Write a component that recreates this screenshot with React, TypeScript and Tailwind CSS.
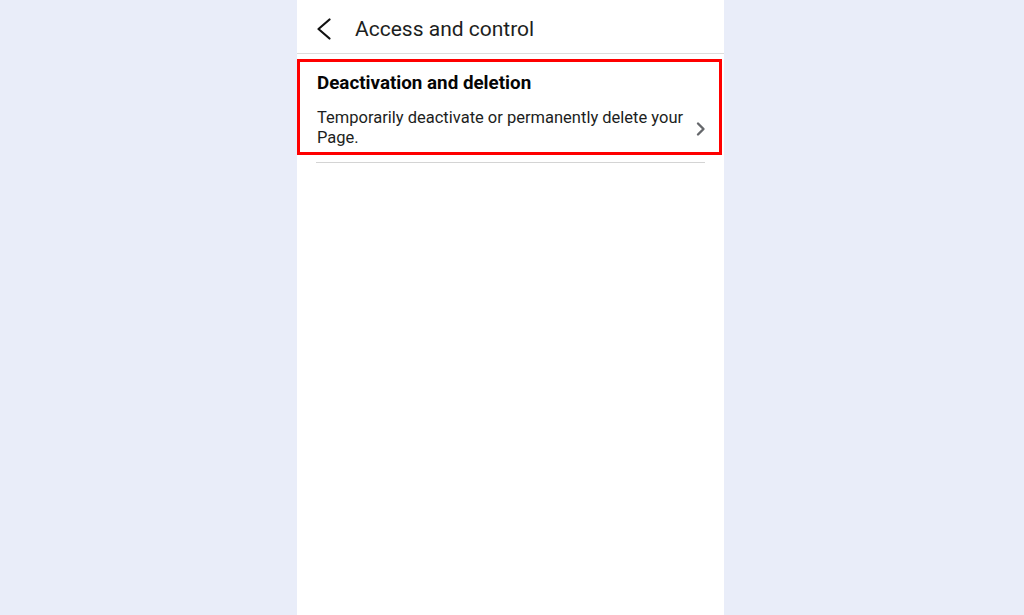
export default function App() {
  return (
    <div
      className="w-[1024px] h-[615px] bg-[#e9edf9] overflow-hidden"
      style={{ fontFamily: "Roboto, 'Liberation Sans', sans-serif" }}
    >
      <div className="ml-[297px] w-[427px] h-full bg-white flex flex-col">
        <div className="h-[54px] pt-[5px] flex items-center border-b border-[#dcdcdc] shrink-0">
          <svg className="ml-[19px] w-[16px] h-[22px]" viewBox="0 0 16 22" fill="none">
            <polyline points="13.5,1.5 2.5,11 13.5,20.5" stroke="#111" strokeWidth="2.2" strokeLinecap="round" strokeLinejoin="round" />
          </svg>
          <span className="ml-[23px] text-[21px] text-[#1c1e21] leading-none">Access and control</span>
        </div>

        <div className="mt-[5px] mr-[2px] border-[3px] border-[#ff0000] pl-[17px] pr-[12px] pt-[10px] pb-[4px]">
          <div className="text-[18.8px] font-bold text-[#050505] leading-[22px]">
            Deactivation and deletion
          </div>
          <div className="mt-[14px] flex items-center">
            <div className="flex-1 text-[16.5px] leading-[20px] text-[#1c1e21]">
              Temporarily deactivate or permanently delete your Page.
            </div>
            <svg className="w-[12px] h-[16px] shrink-0 ml-[4px] mt-[2px]" viewBox="0 0 12 16" fill="none">
              <polyline points="3,2.5 8.5,8 3,13.5" stroke="#65676b" strokeWidth="2.4" strokeLinecap="round" strokeLinejoin="round" />
            </svg>
          </div>
        </div>

        <div className="mt-[7px] ml-[19px] mr-[19px] border-b border-[#d4d4d4]" />
      </div>
    </div>
  );
}
